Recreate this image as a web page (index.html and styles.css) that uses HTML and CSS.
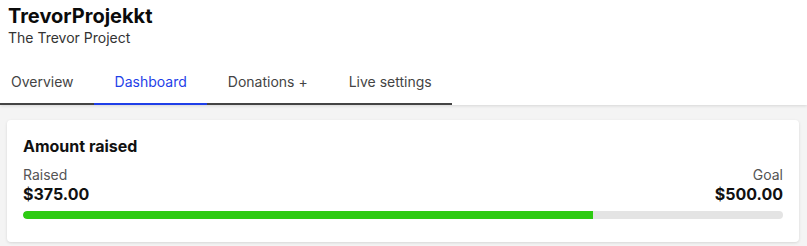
FILE: index.html
```html
<!DOCTYPE html>
<html>
<head>
<meta charset="utf-8">
<link rel="stylesheet" href="styles.css">
</head>
<body>
<header class="header">
  <div class="brand">
    <div class="brand-title">TrevorProjekkt</div>
    <div class="brand-sub">The Trevor Project</div>
  </div>
  <nav class="tabs">
    <a class="tab tab-first">Overview</a>
    <a class="tab tab-active">Dashboard</a>
    <a class="tab">Donations +</a>
    <a class="tab">Live settings</a>
  </nav>
</header>
<main class="main">
  <section class="card">
    <h2 class="card-title">Amount raised</h2>
    <div class="stats">
      <div class="stat">
        <div class="stat-label">Raised</div>
        <div class="stat-value">$375.00</div>
      </div>
      <div class="stat stat-right">
        <div class="stat-label">Goal</div>
        <div class="stat-value">$500.00</div>
      </div>
    </div>
    <div class="bar"><div class="bar-fill" style="width:75%"></div></div>
  </section>
</main>
</body>
</html>
```
FILE: styles.css
```css
* { box-sizing: border-box; }
html, body { margin: 0; padding: 0; }
body {
  font-family: Inter, "Noto Sans", sans-serif;
  background: #f4f4f4;
  color: #111;
  height: 246px;
  overflow: hidden;
}
.header {
  background: #fff;
  box-shadow: 0 1px 3px rgba(0,0,0,0.12);
  position: relative;
}
.brand { padding: 4px 8px 0; }
.brand-title {
  font-size: 20px;
  line-height: 24px;
  font-weight: 700;
  color: #0b0b0b;
}
.brand-sub {
  font-size: 14px;
  line-height: 20px;
  color: #333;
}
.tabs {
  display: inline-flex;
  margin-top: 12px;
  border-bottom: 2px solid #444;
}
.tab {
  font-size: 14px;
  line-height: 20px;
  padding: 12px 20.5px 11px;
  color: #444;
  margin-bottom: -2px;
  border-bottom: 2px solid transparent;
}
.tab-first { padding-left: 11px; }
.tab-active {
  color: #1f3fe8;
  border-bottom-color: #1f3fe8;
}
.main { padding: 15px 8px 0 7px; }
.card {
  background: #fff;
  border-radius: 4px;
  box-shadow: 0 1px 3px rgba(0,0,0,0.12);
  padding: 16px 16px 16px 16px;
}
.card-title {
  margin: 0 0 9px;
  font-size: 16px;
  line-height: 20px;
  font-weight: 700;
}
.stats {
  display: flex;
  justify-content: space-between;
}
.stat-right { text-align: right; }
.stat-label {
  font-size: 14px;
  line-height: 19px;
  color: #555;
}
.stat-value {
  font-size: 16px;
  line-height: 20px;
  font-weight: 700;
}
.bar {
  margin: 7px 0 7px;
  height: 8px;
  border-radius: 4px;
  background: #e4e4e4;
  overflow: hidden;
}
.bar-fill {
  height: 100%;
  background: #2dcb12;
  border-radius: 4px 0 0 4px;
}
```
